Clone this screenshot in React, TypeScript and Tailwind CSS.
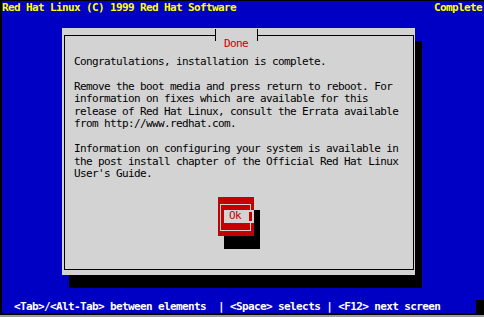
const mono = "font-['DejaVu_Sans_Mono',monospace] text-[11px] tracking-[-0.62px] leading-[12.45px]";

const bodyLines = [
  'Congratulations, installation is complete.',
  '',
  'Remove the boot media and press return to reboot. For',
  'information on fixes which are available for this',
  'release of Red Hat Linux, consult the Errata available',
  'from http://www.redhat.com.',
  '',
  'Information on configuring your system is available in',
  'the post install chapter of the Official Red Hat Linux',
  "User's Guide.",
];

function OkButton() {
  return (
    <div className="ml-[144px] mt-[16.5px] w-[36px] h-[39px] bg-[#c40000] shadow-[6px_13px_0_0_#000] pl-[2px] pt-[7px]">
      <div className="w-[31px] h-[27px] border border-[#d3d3d3] pl-[3px] pt-[5px]">
        <div className="w-[30px] h-[13px] bg-[#d3d3d3] flex items-center">
          <span className={`${mono} text-[#c40000] pl-[5px]`}>Ok</span>
          <span className="ml-auto mr-[2px] w-[3px] h-[9px] bg-[#c40000]" />
        </div>
      </div>
    </div>
  );
}

export default function App() {
  return (
    <div className="w-[484px] h-[317px] bg-black flex flex-col overflow-hidden">
      {/* Console screen */}
      <div className="ml-[2px] mt-[1px] h-[312px] bg-[#0000c4] flex flex-col">
        {/* Root text line */}
        <div className={`${mono} font-bold text-[#ffff00] h-[27px] pt-[1px] pr-[2px] flex justify-between items-start`}>
          <span className="whitespace-pre">Red Hat Linux (C) 1999 Red Hat Software</span>
          <span>Complete</span>
        </div>

        {/* Dialog window */}
        <div className="ml-[60px] w-[353px] h-[247px] bg-[#d3d3d3] shadow-[7px_13px_0_0_#000] pt-[7px] pl-[2px]">
          <div className="relative w-[350px] h-[235px] border border-black pt-[20px] pl-[9px]">
            <div className="absolute left-[150px] -top-[7px] h-[12px] w-[43px] border-l border-r border-black bg-[#d3d3d3] pl-[8px]">
              <span className={`${mono} leading-[12px] text-[#c40000]`}>Done</span>
            </div>
            <div className={`${mono} text-black whitespace-pre`}>
              {bodyLines.map((line, i) => (
                <div key={i} className="h-[12.45px]">{line}</div>
              ))}
            </div>
            <OkButton />
          </div>
        </div>

        {/* Help line */}
        <div className="mt-auto h-[13px] flex items-stretch">
          <span className={`${mono} font-bold text-white whitespace-pre pl-[12px] pt-[1px]`}>
            {'<Tab>/<Alt-Tab> between elements  | <Space> selects | <F12> next screen'}
          </span>
          <span className="ml-auto w-[8px] bg-black" />
        </div>
      </div>
      <div className="mt-[2px] h-[2px] bg-[#9c9c9c]" />
    </div>
  );
}
